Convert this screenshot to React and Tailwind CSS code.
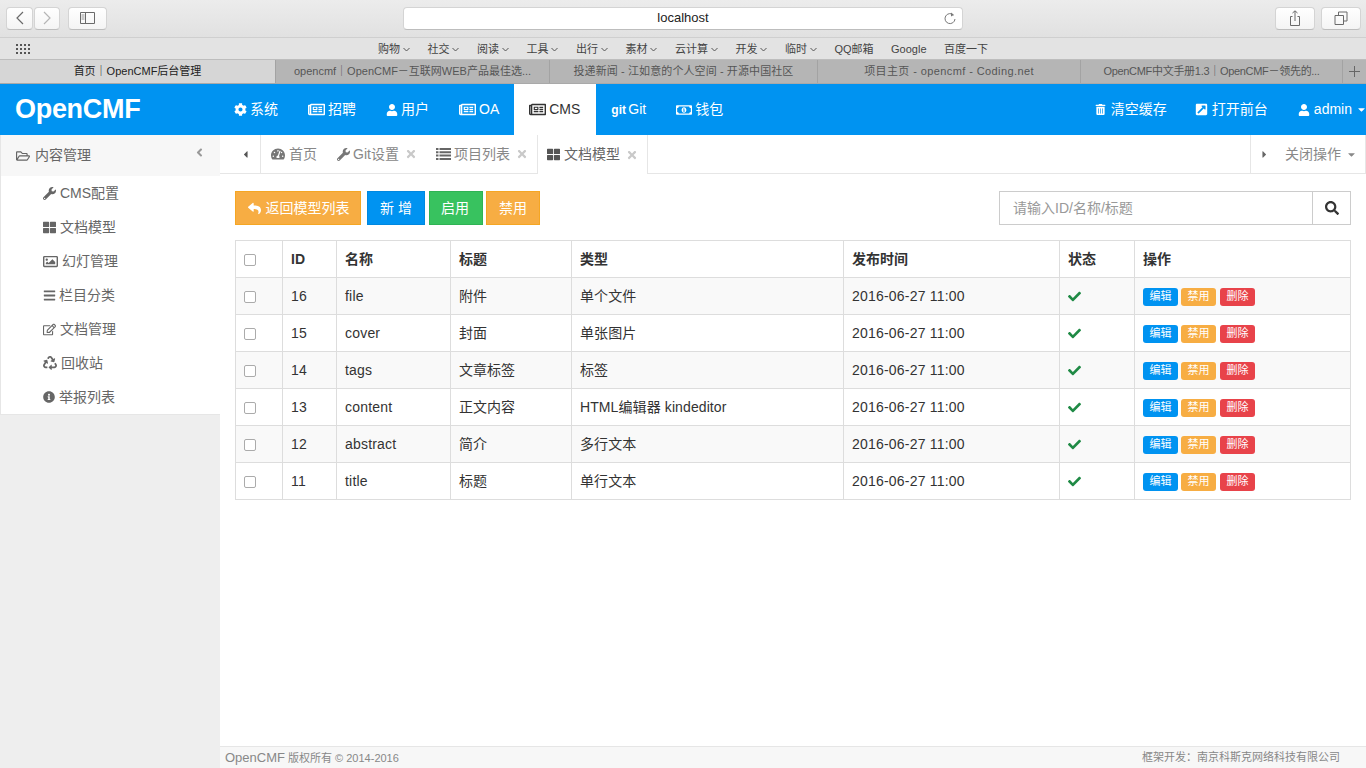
import {
    FaAngleLeft, FaCaretDown, FaCaretLeft, FaCaretRight, FaCheck, FaCog, FaExternalLinkSquareAlt,
    FaBars, FaInfoCircle, FaRecycle, FaRegEdit, FaRegFolderOpen, FaRegImage,
    FaRegMoneyBillAlt, FaRegNewspaper, FaReply, FaSearch, FaTachometerAlt, FaThLarge, FaTimes,
    FaTrashAlt, FaUser, FaWrench,
} from "react-icons/fa";

const bookmarks = [
    ["购物", true], ["社交", true], ["阅读", true], ["工具", true], ["出行", true], ["素材", true],
    ["云计算", true], ["开发", true], ["临时", true], ["QQ邮箱", false], ["Google", false], ["百度一下", false],
];

const browserTabs = [
    ["opencmf｜OpenCMF－互联网WEB产品最佳选...", "w-[274px]"],
    ["投递新闻 - 江如意的个人空间 - 开源中国社区", "w-[268px] tracking-[0.1px]"],
    ["项目主页 - opencmf - Coding.net", "w-[263px] tracking-[0.4px]"],
    ["OpenCMF中文手册1.3｜OpenCMF－领先的...", "w-[262px] tracking-[-0.3px]"],
];

const navItems = [
    [<FaCog className="text-[13px]" />, "系统", false, "pl-[14px] pr-[15px]"],
    [<FaRegNewspaper className="text-[17px]" />, "招聘", false, "px-[15px]"],
    [<FaUser className="text-[12px]" />, "用户", false, "px-[15px]"],
    [<FaRegNewspaper className="text-[17px]" />, "OA", false, "px-[15px]"],
    [<FaRegNewspaper className="text-[17px]" />, "CMS", true, "pl-[15px] pr-[16px]"],
    [<span className="font-bold text-[12px] w-[14px]">git</span>, "Git", false, "px-[15px]"],
    [<FaRegMoneyBillAlt className="text-[16px]" />, "钱包", false, "px-[15px]"],
];

const sideItems = [
    [<FaWrench className="text-[13px]" />, "CMS配置"],
    [<FaThLarge className="text-[13px]" />, "文档模型"],
    [<FaRegImage className="text-[15px]" />, "幻灯管理"],
    [<FaBars className="text-[13px] -mr-px" />, "栏目分类"],
    [<FaRegEdit className="text-[13px]" />, "文档管理"],
    [<FaRecycle className="text-[14px]" />, "回收站"],
    [<FaInfoCircle className="text-[12px]" />, "举报列表"],
];

const rows = [
    ["16", "file", "附件", "单个文件"],
    ["15", "cover", "封面", "单张图片"],
    ["14", "tags", "文章标签", "标签"],
    ["13", "content", "正文内容", "HTML编辑器 kindeditor"],
    ["12", "abstract", "简介", "多行文本"],
    ["11", "title", "标题", "单行文本"],
];

function ChromeButton({ className, children }) {
    return (
        <div className={"h-[23px] flex items-center justify-center bg-gradient-to-b from-white to-[#f4f4f4] border border-[#d4d4d4] border-b-[#bdbdbd] rounded-[4px] " + className}>
            {children}
        </div>
    );
}

function BrowserChrome() {
    return (
        <div className="text-[#4a4a4a]">
            <div className="h-[38px] bg-gradient-to-b from-[#ececec] to-[#e1e1e1] border-b border-[#cfcfcf] flex items-center pl-[6px] pr-[5px] pb-[1px]">
                <ChromeButton className="w-[27px]">
                    <svg width="10" height="14" viewBox="0 0 10 14" fill="none" stroke="#6a6a6a" strokeWidth="1.2"><path d="M8 1 2 7l6 6" /></svg>
                </ChromeButton>
                <ChromeButton className="w-[26px] ml-[1px]">
                    <svg width="10" height="14" viewBox="0 0 10 14" fill="none" stroke="#b5b5b5" strokeWidth="1.2"><path d="m2 1 6 6-6 6" /></svg>
                </ChromeButton>
                <ChromeButton className="ml-[8px] w-[39px]">
                    <svg width="15" height="12" viewBox="0 0 15 12" fill="none" stroke="#6a6a6a"><path d="M.5.5h14v11H.5zM5.5.5v11" /><path d="M1.5 3h3M1.5 5h3M1.5 7h3" strokeWidth=".7" /></svg>
                </ChromeButton>
                <div className="relative ml-[296px] w-[560px] h-[23px] bg-white border border-[#d4d4d4] border-b-[#bdbdbd] rounded-[4px] flex items-center justify-center text-[13px] text-[#222]">
                    localhost
                    <svg className="absolute right-[5px] top-[3px]" width="14" height="15" viewBox="0 0 14 15" fill="none" stroke="#777" strokeWidth="1"><path d="M10.5 4A5 5 0 1 0 12 8" /><path d="M8 1.5 10.8 4 8 5.5" fill="#777" stroke="none" /></svg>
                </div>
                <ChromeButton className="ml-auto w-[40px]">
                    <svg width="14" height="17" viewBox="0 0 14 17" fill="none" stroke="#6a6a6a"><path d="M4.5 6.500h-2v9h9v-9h-2M7 11V1M4.500 3 7 .8 9.500 3" /></svg>
                </ChromeButton>
                <ChromeButton className="w-[40px] ml-[6px]">
                    <svg width="14" height="14" viewBox="0 0 14 14" fill="none" stroke="#6a6a6a"><path d="M1 4.500h8.500v9H1zM4.500 4.500V1H13v9H9.500" /></svg>
                </ChromeButton>
            </div>
            <div className="relative h-[22px] pt-px pl-[3px] bg-[#e3e3e3] flex items-center justify-center gap-[14.5px] text-[11px] text-[#444] border-b border-[#bdbdbd]">
                <div className="absolute left-[16px] top-[6px] grid grid-cols-4 gap-x-[2px] gap-y-[2px]">
                    {Array.from({ length: 12 }).map((_, i) => (
                        <span key={i} className="w-[2px] h-[2px] bg-[#555]" />
                    ))}
                </div>
                {bookmarks.map(([name, hasMenu]) => (
                    <span key={name} className="flex items-center gap-[3px] mr-[3px]">
                        {name}
                        {hasMenu && (
                            <svg width="7" height="5" viewBox="0 0 7 5" fill="none" stroke="#555"><path d="m.5 1 3 3 3-3" /></svg>
                        )}
                    </span>
                ))}
            </div>
            <div className="h-[24px] flex text-[11px] border-b border-[#a9a9a9] bg-[#b5b5b5]">
                <div className="w-[276px] bg-[#d6d6d6] flex items-center justify-center text-[#222] border-r border-[#a3a3a3]">首页｜OpenCMF后台管理</div>
                {browserTabs.map(([title, width]) => (
                    <div key={title} className={"flex items-center justify-center text-[#555] border-r border-[#a3a3a3] " + width}>{title}</div>
                ))}
                <div className="flex-1 flex items-center justify-center">
                    <svg width="11" height="11" viewBox="0 0 11 11" stroke="#666"><path d="M5.500 0v11M0 5.500h11" /></svg>
                </div>
            </div>
        </div>
    );
}

function TopNav() {
    return (
        <div className="h-[51px] bg-[#0093f1] flex text-white text-[14px]">
            <div className="w-[220px] pl-[15px] flex items-center text-[27px] font-bold tracking-[-0.3px]">OpenCMF</div>
            {navItems.map(([icon, label, active, pad]) => (
                <div key={label} className={"flex items-center gap-[3px] " + pad + (active ? " bg-white text-[#333]" : "")}>
                    {icon}
                    <span>{label}</span>
                </div>
            ))}
            <div className="ml-auto flex">
                <div className="pl-[14px] pr-[13px] flex items-center gap-[5px]"><FaTrashAlt className="text-[11px]" />清空缓存</div>
                <div className="px-[15px] flex items-center gap-[4px]"><FaExternalLinkSquareAlt className="text-[13px]" />打开前台</div>
                <div className="pl-[15px] -mr-px flex items-center gap-[4px]">
                    <FaUser className="text-[12px]" />admin
                    <FaCaretDown className="text-[11px]" />
                </div>
            </div>
        </div>
    );
}

function Sidebar() {
    return (
        <div className="w-[220px] shrink-0 bg-[#eeeeee]">
            <div className="bg-white border-l border-b border-[#e6e6e6] text-[#666] text-[14px]">
                <div className="h-[41px] bg-[#f7f7f7] pl-[15px] pr-[14px] flex items-center gap-[5px]">
                    <FaRegFolderOpen className="text-[14px]" />
                    <span>内容管理</span>
                    <FaAngleLeft className="ml-auto mb-[6px] text-[13px] text-[#999]" />
                </div>
                <div>
                    {sideItems.map(([icon, label]) => (
                        <div key={label} className="h-[34px] pl-[42px] flex items-center gap-[4px]">
                            {icon}
                            <span>{label}</span>
                        </div>
                    ))}
                </div>
            </div>
        </div>
    );
}

function ListIcon({ className }) {
    return (
        <svg className={className} width="15" height="12" viewBox="0 0 15 12" fill="currentColor">
            <path d="M0 0h2.500v2H0zM3.500 0H15v2H3.500zM0 3.300h2.500v2H0zM3.500 3.300H15v2H3.500zM0 6.600h2.500v2H0zM3.500 6.600H15v2H3.500zM0 9.900h2.500V12H0zM3.500 9.900H15V12H3.500z" />
        </svg>
    );
}

function TabStrip() {
    return (
        <div className="h-[39px] flex border-b border-[#e6e6e6] text-[14px] text-[#888]">
            <div className="w-[41px] flex items-center justify-end pr-[9px] border-r border-[#e6e6e6] text-[#555]">
                <FaCaretLeft className="text-[11px]" />
            </div>
            <div className="pl-[10px] pr-[10px] flex items-center gap-[4px]"><FaTachometerAlt className="text-[14px] text-[#777]" />首页</div>
            <div className="pl-[10px] pr-[9px] flex items-center gap-[3px]">
                <FaWrench className="text-[13px] text-[#777]" />Git设置
                <FaTimes className="ml-[3px] text-[12px] text-[#c9c9c9]" />
            </div>
            <div className="pl-[10px] pr-[9px] flex items-center gap-[3px]">
                <ListIcon className="text-[#666]" />项目列表
                <FaTimes className="ml-[3px] text-[12px] text-[#c9c9c9]" />
            </div>
            <div className="relative -mb-[1px] bg-white pl-[9px] pr-[9px] flex items-center gap-[4px] border-l border-r border-[#e6e6e6] text-[#666]">
                <FaThLarge className="text-[13px] text-[#555]" />文档模型
                <FaTimes className="ml-[2px] text-[12px] text-[#c9c9c9]" />
            </div>
            <div className="ml-auto w-[116px] flex items-center border-l border-r border-[#e6e6e6]">
                <FaCaretRight className="ml-[8px] text-[11px] text-[#666]" />
                <span className="ml-[15px]">关闭操作</span>
                <FaCaretDown className="ml-[5px] text-[11px]" />
            </div>
        </div>
    );
}

function Toolbar() {
    return (
        <div className="flex justify-between text-[14px] text-white">
            <div className="flex">
                <button className="w-[126px] h-[34px] pl-px bg-[#f7ad43] border border-[#f5a623] flex items-center justify-center gap-[5px]">
                    <FaReply className="text-[13px]" />返回模型列表
                </button>
                <button className="ml-[6px] w-[58px] h-[34px] bg-[#0093f1] border border-[#0088e0]">新 增</button>
                <button className="ml-[4px] w-[54px] h-[34px] pr-[2px] bg-[#38c25f] border border-[#2fb354]">启用</button>
                <button className="ml-[3px] w-[54px] h-[34px] bg-[#f7ad43] border border-[#f5a623]">禁用</button>
            </div>
            <div className="w-[352px] h-[34px] flex border border-[#cccccc]">
                <div className="flex-1 pl-[13px] flex items-center text-[#999]">请输入ID/名称/标题</div>
                <div className="w-[38px] border-l border-[#cccccc] flex items-center justify-center text-[#333]">
                    <FaSearch className="text-[14px]" />
                </div>
            </div>
        </div>
    );
}

function Checkbox() {
    return <input type="checkbox" className="block appearance-none w-[12px] h-[12px] mt-px bg-white border border-[#ababab] rounded-[2px]" />;
}

function DataTable() {
    const cell = "border border-[#dddddd] px-2 h-[37px] text-left";
    return (
        <table className="mt-[15px] w-[1116px] table-fixed border-collapse text-[14px] text-[#333]">
            <colgroup>
                <col className="w-[47px]" />
                <col className="w-[54px]" />
                <col className="w-[114px]" />
                <col className="w-[121px]" />
                <col className="w-[272px]" />
                <col className="w-[216px]" />
                <col className="w-[75px]" />
                <col />
            </colgroup>
            <thead>
                <tr className="font-bold">
                    <th className={cell}><Checkbox /></th>
                    <th className={cell}>ID</th>
                    <th className={cell}>名称</th>
                    <th className={cell}>标题</th>
                    <th className={cell}>类型</th>
                    <th className={cell}>发布时间</th>
                    <th className={cell}>状态</th>
                    <th className={cell}>操作</th>
                </tr>
            </thead>
            <tbody>
                {rows.map(([id, name, title, type], i) => (
                    <tr key={id} className={i % 2 === 0 ? "bg-[#f9f9f9]" : ""}>
                        <td className={cell}><Checkbox /></td>
                        <td className={cell + " tracking-[0.2px]"}>{id}</td>
                        <td className={cell + " tracking-[0.2px]"}>{name}</td>
                        <td className={cell}>{title}</td>
                        <td className={cell + " tracking-[0.1px]"}>{type}</td>
                        <td className={cell + " tracking-[0.2px]"}>2016-06-27 11:00</td>
                        <td className={cell}><FaCheck className="text-[13px] text-[#1f8a45]" /></td>
                        <td className={cell}>
                            <div className="flex mt-[1px] text-[11px] text-white leading-none">
                                <span className="w-[35px] h-[18px] rounded-[3px] bg-[#0093f1] flex items-center justify-center">编辑</span>
                                <span className="ml-[3px] w-[35px] h-[18px] rounded-[3px] bg-[#f7ad43] flex items-center justify-center">禁用</span>
                                <span className="ml-[4px] w-[35px] h-[18px] rounded-[3px] bg-[#e8434a] flex items-center justify-center">删除</span>
                            </div>
                        </td>
                    </tr>
                ))}
            </tbody>
        </table>
    );
}

export default function App() {
    return (
        <div className="w-[1366px] h-[768px] overflow-hidden flex flex-col bg-white font-['Liberation_Sans','Noto_Sans_CJK_SC',sans-serif]">
            <BrowserChrome />
            <TopNav />
            <div className="flex-1 flex min-h-0">
                <Sidebar />
                <div className="flex-1 flex flex-col min-w-0">
                    <TabStrip />
                    <div className="flex-1 pt-[17px] pl-[15px]">
                        <div className="w-[1116px]">
                            <Toolbar />
                            <DataTable />
                        </div>
                    </div>
                    <div className="h-[22px] bg-[#f7f7f7] border-t border-[#e6e6e6] flex items-center justify-between pl-[5px] pr-[26px] text-[11px] text-[#888]">
                        <span><span className="text-[13px]">OpenCMF</span> 版权所有 © 2014-2016</span>
                        <span>框架开发：南京科斯克网络科技有限公司</span>
                    </div>
                </div>
            </div>
        </div>
    );
}
